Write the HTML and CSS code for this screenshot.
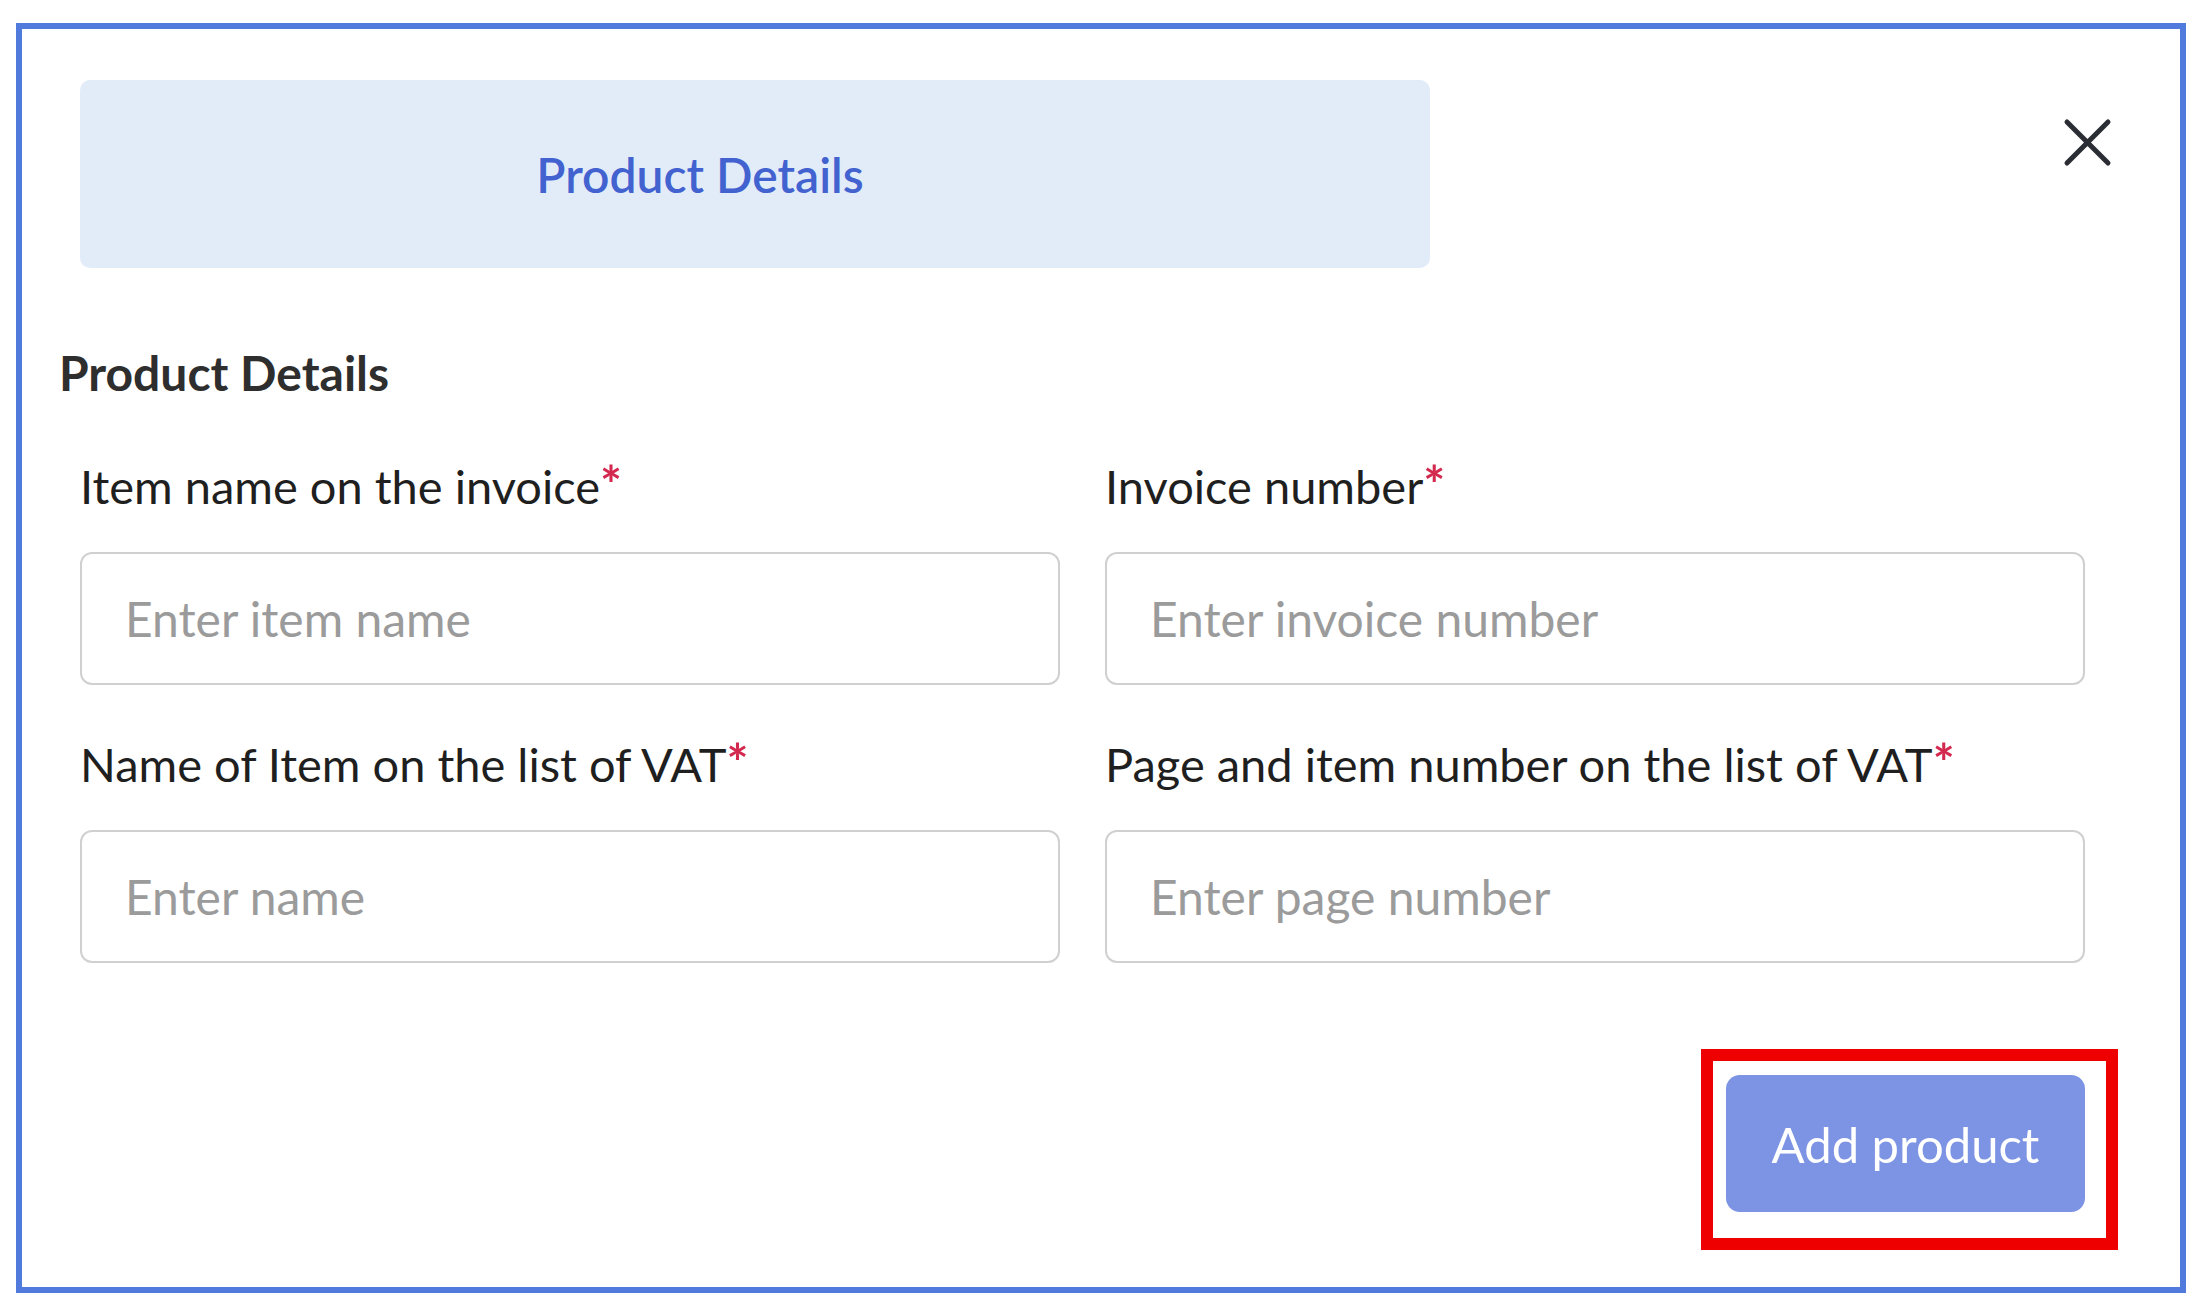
FILE: index.html
```html
<!DOCTYPE html>
<html lang="en">
<head>
  <meta charset="UTF-8">
  <meta name="viewport" content="width=device-width, initial-scale=1.0">
  <title>Product Details</title>
  <link rel="stylesheet" href="styles.css">
</head>
<body>
  <div class="modal">
    <div class="modalTop">
      <div class="tabBox">
        <span class="tabTitle">Product Details</span>
      </div>
      <button class="closeBtn" aria-label="close">
        <svg width="49" height="49" viewBox="0 0 49 49">
          <path d="M4 4 L45 45 M45 4 L4 45" stroke="#2a2d34" stroke-width="5" stroke-linecap="round" fill="none"/>
        </svg>
      </button>
    </div>

    <h2 class="sectionTitle">Product Details</h2>

    <form class="productForm">
      <div class="field">
        <label for="itemName">Item name on the invoice<span class="req">*</span></label>
        <input type="text" id="itemName" placeholder="Enter item name" />
      </div>
      <div class="field">
        <label for="invoiceNo">Invoice number<span class="req">*</span></label>
        <input type="text" id="invoiceNo" placeholder="Enter invoice number" />
      </div>
      <div class="field">
        <label for="vatName">Name of Item on the list of VAT<span class="req">*</span></label>
        <input type="text" id="vatName" placeholder="Enter name" />
      </div>
      <div class="field">
        <label for="vatPage">Page and item number on the list of VAT<span class="req">*</span></label>
        <input type="text" id="vatPage" placeholder="Enter page number" />
      </div>
    </form>

    <div class="actions">
      <div class="highlight">
        <button class="addBtn">Add product</button>
      </div>
    </div>
  </div>
</body>
</html>
```

FILE: styles.css
```css
body {
  margin: 0;
  background-color: white;
  font-family: Lato, "Open Sans", sans-serif;
}
.modal {
  box-sizing: border-box;
  width: 2170px;
  height: 1270px;
  margin: 23px 0 0 16px;
  border: 6px solid #507bdd;
  background-color: white;
}
.modalTop {
  display: flex;
  justify-content: space-between;
  align-items: flex-start;
  padding: 51px 68px 0 58px;
}
.tabBox {
  width: 1350px;
  height: 188px;
  display: flex;
  align-items: center;
  justify-content: center;
  background-color: #e2ecf8;
  border-radius: 10px;
}
.tabTitle {
  font-size: 48px;
  font-weight: 600;
  color: #4262d0;
  margin-left: -110px;
}
.closeBtn {
  margin-top: 38px;
  padding: 0;
  border: none;
  background: none;
  width: 49px;
  height: 49px;
  cursor: pointer;
}
.closeBtn svg {
  display: block;
}
.sectionTitle {
  margin: 81px 0 0 37px;
  font-size: 48px;
  line-height: 48px;
  font-weight: 700;
  color: #2e2e2e;
}
.productForm {
  display: grid;
  grid-template-columns: 980px 980px;
  column-gap: 45px;
  row-gap: 55px;
  padding: 65px 0 0 58px;
}
.field label {
  display: block;
  font-size: 47px;
  line-height: 48px;
  color: #1f1f1f;
  margin-bottom: 42px;
}
.req {
  color: #d3294f;
  font-size: 1.1em;
  font-weight: 700;
  line-height: 0;
}
.field input {
  box-sizing: border-box;
  display: block;
  width: 100%;
  height: 133px;
  padding: 0 0 0 43px;
  border: 2px solid #d0d0d0;
  border-radius: 12px;
  font-family: Lato, "Open Sans", sans-serif;
  font-size: 48px;
  color: #222;
  outline: none;
}
.field input::placeholder {
  color: #9b9b9b;
}
.actions {
  display: flex;
  justify-content: flex-end;
  padding: 86px 62px 0 0;
}
.highlight {
  border: 12px solid #ee0000;
  padding: 14px 21px 26px 13px;
}
.addBtn {
  display: block;
  width: 359px;
  height: 137px;
  border: none;
  border-radius: 14px;
  background-color: #7c94e3;
  color: white;
  font-family: Lato, "Open Sans", sans-serif;
  font-size: 49px;
  cursor: pointer;
}
```
